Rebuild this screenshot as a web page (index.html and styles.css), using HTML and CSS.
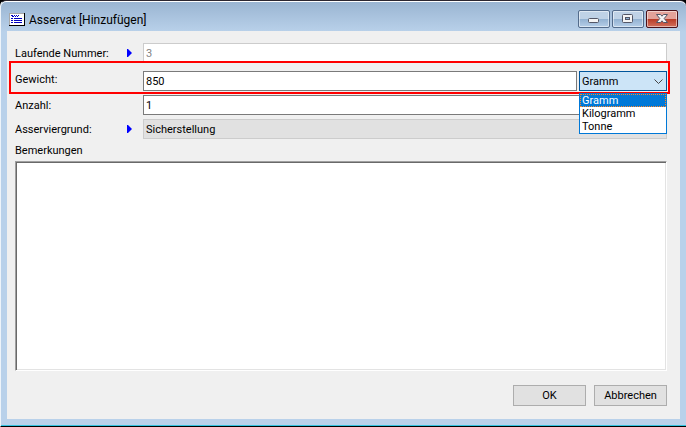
FILE: index.html
```html
<!DOCTYPE html>
<html lang="de">
<head>
    <meta charset="UTF-8">
    <meta name="viewport" content="width=device-width, initial-scale=1.0">
    <title>Asservat [Hinzufügen]</title>
    <link rel="stylesheet" href="styles.css">
</head>
<body>
    <div class="window">
        <header class="titlebar">
            <svg class="app-icon" width="16" height="13" viewBox="0 0 16 13" shape-rendering="crispEdges" aria-hidden="true">
                <path fill="#000" d="M0 0h16v13H0z"/>
                <path fill="#a8a8a8" d="M0 0h15v12H0z"/>
                <path fill="#fff" d="M1 1h14v11H1z"/>
                <path fill="#0000c0" d="M2 2h2v1H2zM5 2h1v1H5zM7 2h1v1H7zM9 2h1v1H9zM3 3h2v1H3zM6 3h1v1H6zM8 3h1v1H8zM2 5h2v1H2zM5 5h8v1H5zM2 7h2v1H2zM5 7h8v1H5zM2 9h2v1H2zM5 9h8v1H5z"/>
            </svg>
            <h1 class="title">Asservat [Hinzufügen]</h1>
            <div class="window-buttons">
                <button type="button" class="win-btn" aria-label="Minimieren">
                    <svg width="30" height="16" viewBox="0 0 30 16" aria-hidden="true">
                        <rect x="9.5" y="7.5" width="10" height="4" rx="1" fill="#f4f4f4" stroke="#535666"/>
                    </svg>
                </button>
                <button type="button" class="win-btn" aria-label="Maximieren">
                    <svg width="30" height="16" viewBox="0 0 30 16" aria-hidden="true">
                        <rect x="9.5" y="3.5" width="10" height="8" rx="1" fill="#f4f4f4" stroke="#535666"/>
                        <rect x="12.5" y="6.5" width="4" height="2" fill="#8db0d3" stroke="#535666"/>
                    </svg>
                </button>
                <button type="button" class="win-btn win-close" aria-label="Schließen">
                    <svg width="30" height="16" viewBox="0 0 30 16" aria-hidden="true">
                        <path fill="#f4f4f4" stroke="#535666" stroke-linejoin="round" d="M9.500 3.500h4l1.500 1.700 1.500-1.700h4l-3.300 4 3.300 4h-4l-1.500-1.700-1.500 1.700h-4l3.300-4z"/>
                    </svg>
                </button>
            </div>
        </header>

        <form class="client">
            <div class="row row-number">
                <label for="nummer">Laufende Nummer:</label>
                <svg class="marker" width="5" height="8" viewBox="0 0 5 8" aria-hidden="true"><path fill="#00f" d="M0 0h1l4 4-4 4H0z"/></svg>
                <input type="text" id="nummer" class="field" value="3" disabled>
            </div>

            <div class="row row-weight">
                <label for="gewicht">Gewicht:</label>
                <input type="text" id="gewicht" class="field" value="850">
                <div class="unit">
                    <select id="einheit" class="unit-select" aria-label="Einheit">
                        <option selected>Gramm</option>
                        <option>Kilogramm</option>
                        <option>Tonne</option>
                    </select>
                    <svg class="chevron" width="9" height="6" viewBox="0 0 9 6" aria-hidden="true"><path fill="none" stroke="#444" d="M.5.5l4 4 4-4"/></svg>
                    <ul class="unit-list" role="listbox" aria-label="Einheit">
                        <li role="option" class="selected" aria-selected="true">Gramm</li>
                        <li role="option">Kilogramm</li>
                        <li role="option">Tonne</li>
                    </ul>
                </div>
            </div>

            <div class="row">
                <label for="anzahl">Anzahl:</label>
                <input type="text" id="anzahl" class="field" value="1">
            </div>

            <div class="row">
                <label for="grund">Asserviergrund:</label>
                <svg class="marker" width="5" height="8" viewBox="0 0 5 8" aria-hidden="true"><path fill="#00f" d="M0 0h1l4 4-4 4H0z"/></svg>
                <select id="grund" class="field reason">
                    <option>Sicherstellung</option>
                </select>
            </div>

            <label class="notes-label" for="bemerkungen">Bemerkungen</label>
            <textarea id="bemerkungen" class="notes"></textarea>

            <div class="actions">
                <button type="button" class="btn">OK</button>
                <button type="button" class="btn">Abbrechen</button>
            </div>
        </form>
    </div>
</body>
</html>
```

FILE: styles.css
```css
* {
    box-sizing: border-box;
}

body {
    margin: 0;
    background: #000;
    font-family: Roboto, Tahoma, sans-serif;
    font-size: 11px;
    line-height: 14px;
    color: #000;
}

input,
select,
textarea,
button {
    margin: 0;
    font: inherit;
    color: inherit;
    border-radius: 0;
}

.window {
    display: flex;
    flex-direction: column;
    min-height: 100vh;
    padding: 0 6px 7px;
    background: linear-gradient(#99b4d1, #b9d1ea 31px);
    border-top: 1px solid #2b2630;
    border-bottom: 1px solid #000;
    border-left: 1px solid #eef4fa;
    border-radius: 6px 6px 0 0;
    box-shadow: inset 0 1px #fff, inset 0 -1px #35c3e0;
}

/* Title bar */
.titlebar {
    display: flex;
    align-items: center;
    height: 30px;
    padding: 6px 2px 0;
}

.title {
    flex: 1;
    margin: 0 0 0 4px;
    padding-top: 2px;
    font-size: 12px;
    font-weight: normal;
    line-height: 16px;
}

.window-buttons {
    display: flex;
    gap: 2px;
}

.win-btn {
    width: 32px;
    height: 18px;
    padding: 0;
    border: 1px solid #536b8b;
    border-radius: 2px;
    background: linear-gradient(#bfd2e6 48%, #92b1d1 50%, #b5cee8);
    box-shadow: inset 0 0 0 1px rgba(255, 255, 255, 0.5);
}

.win-btn svg {
    display: block;
}

.win-close {
    border-color: #4b1119;
    background: linear-gradient(#e3a299 48%, #b83a25 50%, #d2705d);
}

/* Form */
.client {
    flex: 1;
    display: flex;
    flex-direction: column;
    padding: 12px 13px 13px 8px;
    background: #f0f0f0;
}

.row {
    display: flex;
    align-items: center;
    position: relative;
    margin-bottom: 4px;
}

.row label {
    flex: 1;
    padding-top: 2px;
}

.row .field {
    flex: none;
    width: calc(100% - 128px);
}

.marker {
    margin-right: 11px;
}

.field {
    height: 20px;
    padding: 1px 2px 0;
    border: 1px solid #7a7a7a;
    background: #fff;
}

.field:disabled {
    border-color: #ccc;
    color: #838383;
}

.row-number {
    margin-bottom: 8px;
}

.row-weight label {
    align-self: flex-start;
}

.row-weight .field {
    width: calc(100% - 218px);
}

/* Highlight frame around the weight row */
.row-weight::after {
    content: "";
    position: absolute;
    inset: -10px -3px -3px -6px;
    border: 2px solid #f00;
    pointer-events: none;
}

.unit {
    position: relative;
    width: 88px;
    margin-left: 2px;
}

.unit-select {
    display: block;
    width: 100%;
    height: 20px;
    padding: 2px 2px 0;
    appearance: none;
    border: 1px solid #00559b;
    background: #cce4f7;
}

.chevron {
    position: absolute;
    top: 8px;
    right: 4px;
    pointer-events: none;
}

.unit-list {
    position: absolute;
    top: 100%;
    left: 0;
    right: 0;
    z-index: 1;
    margin: 2px 0 0;
    padding: 0;
    border: 1px solid #0078d7;
    background: #fff;
    list-style: none;
    line-height: 13px;
}

.unit-list li {
    padding-left: 2px;
}

.unit-list .selected {
    background: #0078d7;
    color: #fff;
    outline: 1px dotted #ff8728;
    outline-offset: -1px;
}

.reason {
    padding-top: 2px;
    appearance: none;
    border-color: #ccc;
    background: #e1e1e1;
}

.notes-label {
    padding-top: 1px;
    margin-bottom: 3px;
}

.notes {
    flex: 1;
    min-height: 60px;
    padding: 2px;
    border: 1px solid;
    border-color: #a0a0a0 #fff #fff #a0a0a0;
    background: #fff;
    box-shadow: inset 1px 1px #696969, inset -1px -1px #e3e3e3;
    resize: none;
}

.actions {
    display: flex;
    justify-content: flex-end;
    gap: 8px;
    margin-top: 14px;
}

.btn {
    width: 73px;
    height: 21px;
    padding: 1px 0 0;
    border: 1px solid #adadad;
    background: #e1e1e1;
}
```
